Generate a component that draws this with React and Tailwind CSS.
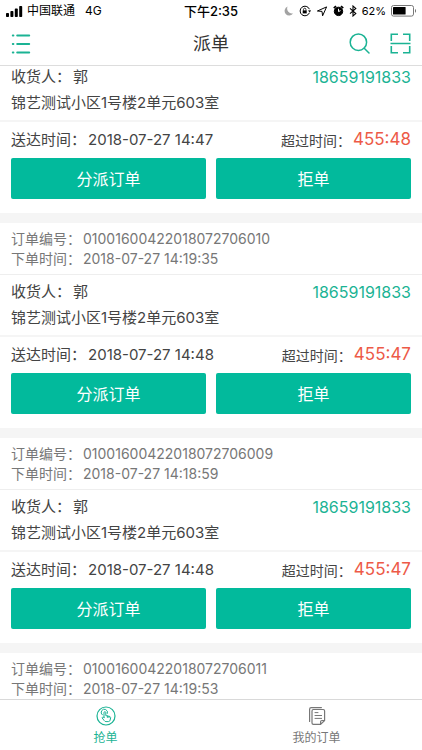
import React, { useLayoutEffect, useRef, useState } from 'react';

const orders = [
  {
    id: 1,
    customer: { name: '郭', phone: '18659191833', address: '锦艺测试小区1号楼2单元603室' },
    delivery: '2018-07-27 14:47',
    overtime: '455:48',
  },
  {
    id: 2,
    number: '01001600422018072706010',
    createdAt: '2018-07-27 14:19:35',
    customer: { name: '郭', phone: '18659191833', address: '锦艺测试小区1号楼2单元603室' },
    delivery: '2018-07-27 14:48',
    overtime: '455:47',
  },
  {
    id: 3,
    number: '01001600422018072706009',
    createdAt: '2018-07-27 14:18:59',
    customer: { name: '郭', phone: '18659191833', address: '锦艺测试小区1号楼2单元603室' },
    delivery: '2018-07-27 14:48',
    overtime: '455:47',
  },
  {
    id: 4,
    number: '01001600422018072706011',
    createdAt: '2018-07-27 14:19:53',
  },
];

function StatusBar() {
  return (
    <div className="grid h-[22px] grid-cols-[1fr_auto_1fr] items-center px-1.5 text-[12px] leading-none text-black">
      <div className="flex items-center gap-1">
        <svg width="17" height="11" viewBox="0 0 17 11" fill="currentColor">
          <rect x="0" y="7" width="3" height="4" rx="0.8" />
          <rect x="4.4" y="5" width="3" height="6" rx="0.8" />
          <rect x="8.8" y="2.6" width="3" height="8.4" rx="0.8" />
          <rect x="13.2" y="0" width="3" height="11" rx="0.8" />
        </svg>
        <span>中国联通</span>
        <span className="ml-1.5">4G</span>
      </div>
      <span className="text-[13px] font-medium">下午2:35</span>
      <div className="flex items-center justify-end gap-[5px]">
        <svg width="10" height="10" viewBox="0 0 10 10" fill="#a3a3a3">
          <path d="M3.6 0.6A4.6 4.6 0 1 0 9.2 7.2 4.8 4.8 0 0 1 3.6 0.6Z" />
        </svg>
        <svg width="12" height="12" viewBox="0 0 12 12" fill="none" stroke="currentColor">
          <path d="M10.4 4.2A4.8 4.8 0 1 0 10.4 7.8" />
          <path d="M9 5.6 10.8 7.4 12 5.2Z" fill="currentColor" stroke="none" />
          <rect x="3.7" y="5.4" width="4" height="3" fill="currentColor" stroke="none" />
          <path d="M4.5 5.6V4.4a1.2 1.2 0 0 1 2.4 0v1.2" strokeWidth="0.8" />
        </svg>
        <svg width="12" height="11" viewBox="0 0 12 11" fill="none" stroke="currentColor" strokeLinejoin="round">
          <path d="M10.6 0.9 6.6 9.8 6 5.4 1.4 5Z" />
        </svg>
        <svg width="11" height="12" viewBox="0 0 11 12" fill="none" stroke="currentColor">
          <circle cx="5.5" cy="6.4" r="4.2" fill="currentColor" />
          <path d="M0.8 3.2 3 1.2M10.2 3.2 8 1.2" strokeWidth="1.8" />
          <path d="M5.5 3.8v2.8l2-1" stroke="white" />
        </svg>
        <svg width="8" height="12" viewBox="0 0 8 12" fill="none" stroke="currentColor" strokeWidth="1.1">
          <path d="M1 3.4 6.8 8.6 4 11V1L6.8 3.4 1 8.6" />
        </svg>
        <span className="text-[11px]">62%</span>
        <svg width="25" height="12" viewBox="0 0 25 12" fill="none">
          <rect x="0.5" y="0.5" width="22" height="10.6" rx="2" stroke="#777" />
          <rect x="2" y="2" width="12.6" height="7.6" rx="0.6" fill="black" />
          <path d="M24 4v3.8c1.4-.4 1.4-3.4 0-3.8Z" fill="#777" />
        </svg>
      </div>
    </div>
  );
}

function Header() {
  return (
    <header className="grid h-[43px] grid-cols-[1fr_auto_1fr] items-center px-[11px] text-[#1bb394]">
      <button type="button" aria-label="菜单" className="justify-self-start">
        <svg width="20" height="20" viewBox="0 0 20 20" fill="none" stroke="currentColor" strokeWidth="2" strokeLinecap="round">
          <path d="M1.8 1.6h.6M6.2 1.6h12M1.8 10h.6M6.2 10h12M1.8 18.4h.6M6.2 18.4h12" />
        </svg>
      </button>
      <h1 className="text-[18px] text-[#333]">派单</h1>
      <div className="flex items-center gap-5 justify-self-end">
        <button type="button" aria-label="搜索">
          <svg width="21" height="21" viewBox="0 0 21 21" fill="none" stroke="currentColor" strokeWidth="1.5" strokeLinecap="round">
            <circle cx="9.4" cy="9.2" r="8.2" />
            <path d="M15.2 15.2 20 20" />
          </svg>
        </button>
        <button type="button" aria-label="扫一扫">
          <svg width="21" height="21" viewBox="0 0 21 21" fill="none" stroke="currentColor" strokeWidth="1.6">
            <path d="M8 1.3H1.3V8M13 1.3h6.7V8M8 19.7H1.3V13M13 19.7h6.7V13M0.5 10.5h20" />
          </svg>
        </button>
      </div>
    </header>
  );
}

function Field({ label, children }) {
  return (
    <p className="flex items-center gap-0.5">
      <span>{label}：</span>
      <span>{children}</span>
    </p>
  );
}

function OrderCard({ order }) {
  const { customer } = order;

  return (
    <li className="border-b-10 border-[#f5f5f5]">
      {order.number && (
        <div className="border-b border-[#eee] px-[11px] pt-1.5 pb-[5px] text-[14px] leading-5 text-[#777]">
          <Field label="订单编号">{order.number}</Field>
          <Field label="下单时间">{order.createdAt}</Field>
        </div>
      )}

      {customer && (
        <>
          <div className="border-b-2 border-[#f5f5f5] px-[11px] pt-1 pb-1 text-[15px] leading-[26px] text-[#444]">
            <div className="flex justify-between">
              <Field label="收货人">{customer.name}</Field>
              <a href={`tel:${customer.phone}`} className="text-[16px] text-[#1bb394]">{customer.phone}</a>
            </div>
            <p>{customer.address}</p>
          </div>

          <div className="px-[11px] pb-3.5 text-[#444]">
            <div className="flex h-9 items-center justify-between">
              <div className="text-[15px]">
                <Field label="送达时间">{order.delivery}</Field>
              </div>
              <div className="text-[14px]">
                <Field label="超过时间">
                  <span className="text-[17px] text-[#ed5a47]">{order.overtime}</span>
                </Field>
              </div>
            </div>
            <div className="grid grid-cols-2 gap-2.5 text-[16px] text-white">
              <button type="button" className="h-[41px] rounded-xs bg-[#02ba9c]">分派订单</button>
              <button type="button" className="h-[41px] rounded-xs bg-[#02ba9c]">拒单</button>
            </div>
          </div>
        </>
      )}
    </li>
  );
}

function TabBar({ active, onChange }) {
  return (
    <nav className="grid grid-cols-2 border-t border-[#d9d9d9] bg-white text-[12px] leading-4">
      <button
        type="button"
        onClick={() => onChange('grab')}
        className={`flex h-[50px] flex-col items-center gap-1 pt-1.5 ${active === 'grab' ? 'text-[#1bb394]' : 'text-[#777]'}`}
      >
        <svg width="20" height="20" viewBox="0 0 20 20" fill="none" stroke="currentColor" strokeLinecap="round" strokeLinejoin="round">
          <circle cx="10" cy="10" r="9" strokeWidth="1.2" />
          <path d="M6.3 8.9A3.2 3.2 0 1 1 11.4 7.4" />
          <path d="M8 11.4V6.6a.9.9 0 0 1 1.8 0v3l3.7.8c.9.2 1.2.8 1.1 1.6l-.5 2.2c-.2.9-.8 1.4-1.7 1.4H9.9c-.7 0-1.2-.3-1.6-.9L6 11.8c.5-.8 1.3-.8 2-.4Z" />
          <path d="M11.4 10v1.4M13 10.4v1.2" />
        </svg>
        抢单
      </button>
      <button
        type="button"
        onClick={() => onChange('mine')}
        className={`flex h-[50px] flex-col items-center gap-1 pt-1.5 ${active === 'mine' ? 'text-[#1bb394]' : 'text-[#777]'}`}
      >
        <svg width="20" height="20" viewBox="0 0 20 20" fill="none" stroke="currentColor" strokeLinecap="round" strokeLinejoin="round">
          <path d="M2.6 15.4V3.2c0-1 .6-1.6 1.6-1.6h10.2" strokeWidth="1.2" />
          <path d="M13.6 18.4H6.4c-.9 0-1.4-.5-1.4-1.4V4.9c0-.9.5-1.4 1.4-1.4h9.8c.9 0 1.4.5 1.4 1.4v9.6l-4 3.9v-2.6c0-.8.5-1.3 1.3-1.3h2.7" strokeWidth="1.2" />
          <path d="M8 6.6h3M8 9.5h6.6M8 12.4h6.6" />
        </svg>
        我的订单
      </button>
    </nav>
  );
}

export default function App() {
  const [tab, setTab] = useState('grab');
  const listRef = useRef(null);

  // keep the list slightly scrolled under the header
  useLayoutEffect(() => {
    listRef.current.scrollTop = 6;
  }, []);

  return (
    <div className="flex h-screen flex-col bg-white font-['Inter','Noto_Sans_CJK_SC',sans-serif]">
      <div className="border-b border-[#ddd]">
        <StatusBar />
        <Header />
      </div>
      <main ref={listRef} className="min-h-0 flex-1 overflow-y-auto [scrollbar-width:none]">
        <ul>
          {orders.map((order) => (
            <OrderCard key={order.id} order={order} />
          ))}
        </ul>
      </main>
      <TabBar active={tab} onChange={setTab} />
    </div>
  );
}
